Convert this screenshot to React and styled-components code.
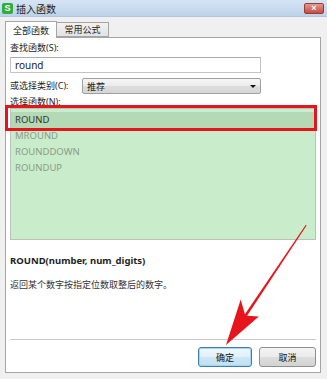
import React from "react";
import styled, { createGlobalStyle } from "styled-components";

const FONT = `"Noto Sans", "Noto Sans CJK SC", sans-serif`;

const GlobalStyle = createGlobalStyle`
  html, body {
    margin: 0;
    padding: 0;
    background: #f0f0f0;
  }
  * {
    box-sizing: border-box;
  }
`;

const Dialog = styled.div`
  position: relative;
  width: 327px;
  height: 379px;
  background: #f0f0f0;
  font-family: ${FONT};
  font-size: 9px;
  color: #1e1e1e;
  overflow: hidden;
  display: flex;
  flex-direction: column;
`;

const TitleBar = styled.div`
  height: 17px;
  display: flex;
  align-items: center;
  padding: 0 3px 0 2px;
  background: linear-gradient(#d6e5f5, #bcd2ea);
  border-bottom: 1px solid #b0c6de;
`;

const AppIcon = styled.div`
  width: 11px;
  height: 11px;
  border-radius: 2px;
  background: #2fae3c;
  color: #fff;
  font-family: "Liberation Sans", sans-serif;
  font-weight: bold;
  font-size: 9px;
  line-height: 11px;
  text-align: center;
`;

const TitleText = styled.div`
  margin-left: 3px;
  font-size: 10px;
  color: #222;
  flex: 1;
`;

const CloseButton = styled.div`
  width: 20px;
  height: 11px;
  border-radius: 2px;
  border: 1px solid #9a3b34;
  background: linear-gradient(#e19a8f, #c64b3e);
  color: #fff;
  font-family: "Liberation Sans", sans-serif;
  font-weight: bold;
  font-size: 9px;
  line-height: 9px;
  text-align: center;
`;

const Body = styled.div`
  flex: 1;
  display: flex;
  flex-direction: column;
  padding: 3px 6px 6px 5px;
`;

const Tabs = styled.div`
  display: flex;
  align-items: flex-end;
  height: 17px;
`;

const Tab = styled.div`
  width: ${({ $w }) => $w}px;
  height: ${({ $active }) => ($active ? 17 : 15)}px;
  margin-bottom: ${({ $active }) => ($active ? -1 : 0)}px;
  display: flex;
  align-items: center;
  justify-content: center;
  border: 1px solid #a5a5a5;
  border-bottom: ${({ $active }) => ($active ? "none" : "1px solid #a5a5a5")};
  border-left: ${({ $first }) => ($first ? "1px solid #a5a5a5" : "none")};
  background: ${({ $active }) =>
    $active ? "#fff" : "linear-gradient(#f2f2f2, #e3e3e3)"};
  position: relative;
  z-index: ${({ $active }) => ($active ? 1 : 0)};
`;

const Panel = styled.div`
  flex: 1;
  background: #fff;
  border: 1px solid #a5a5a5;
  padding: 4px 4px 0 4px;
  display: flex;
  flex-direction: column;
`;

const Label = styled.div`
  height: 12px;
  line-height: 12px;
  color: #1e1e1e;
`;

const TextInput = styled.div`
  margin-top: 3px;
  width: 251px;
  height: 16px;
  border: 1px solid #c4c4c4;
  border-top-color: #abadb3;
  padding-left: 4px;
  font-size: 10px;
  line-height: 14px;
  color: #222;
`;

const Row = styled.div`
  display: flex;
  align-items: center;
  margin-top: 5px;
  height: 16px;
`;

const RowLabel = styled(Label)`
  width: 72px;
`;

const Select = styled.div`
  width: 179px;
  height: 16px;
  border: 1px solid #a0a0a0;
  border-radius: 2px;
  background: linear-gradient(#f6f6f6 0%, #ebebeb 50%, #dddddd 51%, #d6d6d6 100%);
  display: flex;
  align-items: center;
  justify-content: space-between;
  padding: 0 4px 0 4px;
`;

const Caret = styled.div`
  width: 0;
  height: 0;
  border-left: 3px solid transparent;
  border-right: 3px solid transparent;
  border-top: 3px solid #111;
`;

const ListLabel = styled(Label)`
  margin-top: 2px;
`;

const ListWrap = styled.div`
  position: relative;
  margin-top: 0;
`;

const List = styled.div`
  width: 306px;
  height: 132px;
  border: 1px solid #b8c4b8;
  background: #c9edca;
  padding-top: 3px;
`;

const Item = styled.div`
  height: 16px;
  line-height: 16px;
  padding-left: 4px;
  font-size: 9.5px;
  color: ${({ $selected }) => ($selected ? "#333" : "#8c9a8c")};
  background: ${({ $selected }) => ($selected ? "#b4d9b5" : "transparent")};
`;

const Highlight = styled.div`
  position: absolute;
  left: -5px;
  top: -3px;
  width: 312px;
  height: 26px;
  border: 3px solid #e8141b;
  pointer-events: none;
`;

const Signature = styled.div`
  margin-top: 14px;
  font-weight: bold;
  font-size: 9.5px;
  color: #1e1e1e;
`;

const Description = styled.div`
  margin-top: 11px;
  color: #333;
`;

const Spacer = styled.div`
  flex: 1;
`;

const Separator = styled.div`
  height: 1px;
  width: 306px;
  background: #c8c8c8;
`;

const ButtonRow = styled.div`
  display: flex;
  justify-content: flex-end;
  gap: 7px;
  padding: 7px 0 5px 0;
  width: 306px;
`;

const Button = styled.div`
  width: ${({ $w }) => $w}px;
  height: 20px;
  border-radius: 3px;
  display: flex;
  align-items: center;
  justify-content: center;
  border: 1px solid ${({ $primary }) => ($primary ? "#3c7fb1" : "#8e8f8f")};
  background: ${({ $primary }) =>
    $primary
      ? "linear-gradient(#f0f8fd 0%, #e0f0fa 50%, #cde7f6 51%, #bfe0f3 100%)"
      : "linear-gradient(#f4f4f4 0%, #ebebeb 50%, #dddddd 51%, #d3d3d3 100%)"};
  box-shadow: ${({ $primary }) => ($primary ? "inset 0 0 0 1px #a7d3ef" : "none")};
  color: #111;
`;

const Overlay = styled.svg`
  position: absolute;
  left: 0;
  top: 0;
  pointer-events: none;
`;

export default function App() {
  const items = ["ROUND", "MROUND", "ROUNDDOWN", "ROUNDUP"];
  return (
    <>
      <GlobalStyle />
      <Dialog>
        <TitleBar>
          <AppIcon>S</AppIcon>
          <TitleText>插入函数</TitleText>
          <CloseButton>×</CloseButton>
        </TitleBar>
        <Body>
          <Tabs>
            <Tab $w={52} $active $first>
              全部函数
            </Tab>
            <Tab $w={52}>常用公式</Tab>
          </Tabs>
          <Panel>
            <Label>查找函数(S):</Label>
            <TextInput>round</TextInput>
            <Row>
              <RowLabel>或选择类别(C):</RowLabel>
              <Select>
                <span>推荐</span>
                <Caret />
              </Select>
            </Row>
            <ListLabel>选择函数(N):</ListLabel>
            <ListWrap>
              <List>
                {items.map((name, i) => (
                  <Item key={name} $selected={i === 0}>
                    {name}
                  </Item>
                ))}
              </List>
              <Highlight />
            </ListWrap>
            <Signature>ROUND(number, num_digits)</Signature>
            <Description>返回某个数字按指定位数取整后的数字。</Description>
            <Spacer />
            <Separator />
            <ButtonRow>
              <Button $w={54} $primary>
                确定
              </Button>
              <Button $w={57}>取消</Button>
            </ButtonRow>
          </Panel>
        </Body>
        <Overlay width="327" height="379" viewBox="0 0 327 379">
          <polygon
            points="306.6,225.4 247.1,315.7 258.8,316.4 226,345 240.7,299.5 244.9,314.3 305.8,224.8"
            fill="#e8141b"
          />
        </Overlay>
      </Dialog>
    </>
  );
}
